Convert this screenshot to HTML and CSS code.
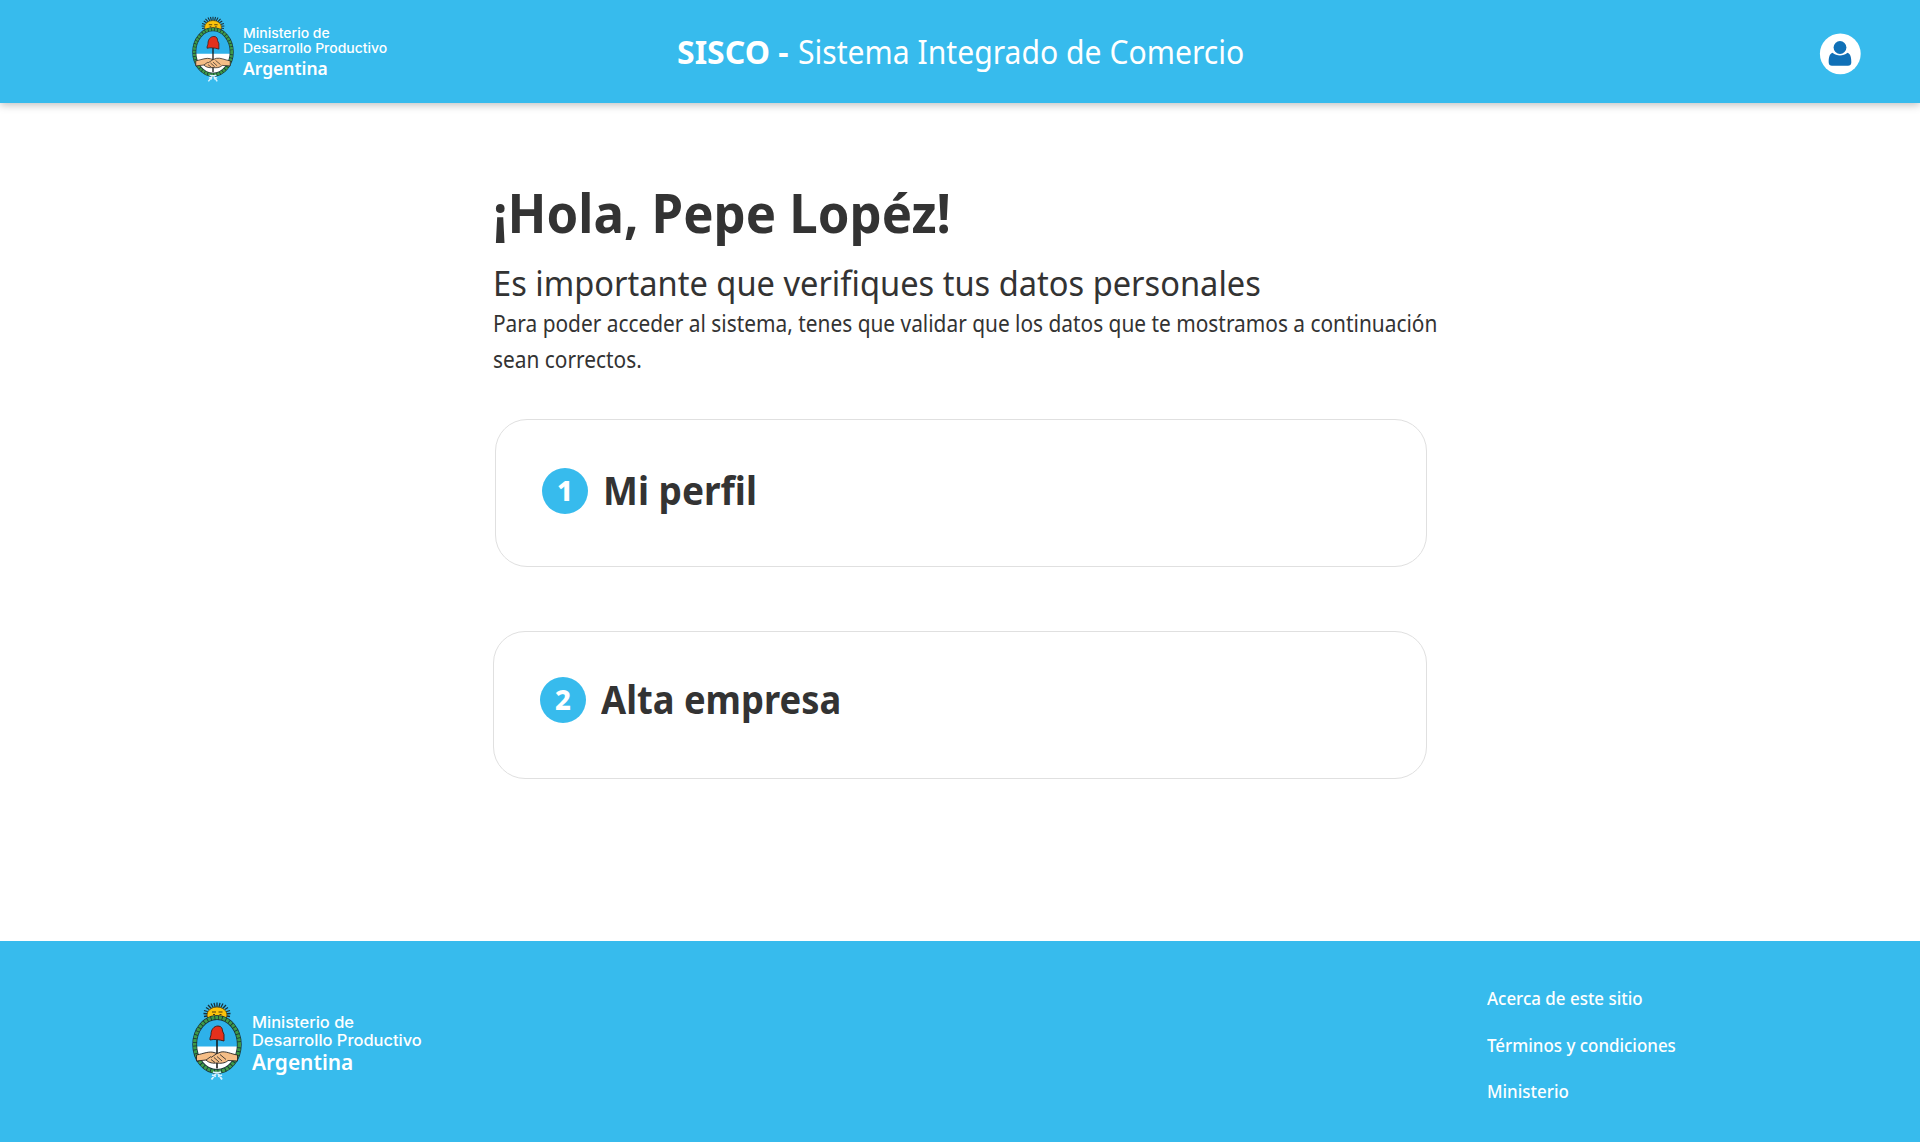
FILE: index.html
```html
<!DOCTYPE html>
<html lang="es">
<head>
<meta charset="utf-8">
<title>SISCO - Sistema Integrado de Comercio</title>
<link rel="stylesheet" href="styles.css">
</head>
<body>
<svg class="defs" aria-hidden="true">
  <symbol id="escudo" viewBox="0 0 50 78">
    <g stroke="#17303a" stroke-width="1.300">
      <path d="M25 12 12 8M25 12 14 5M25 12 16 2.500M25 12 19 1M25 12 22 .3M25 12V0M25 12 28 .3M25 12 31 1M25 12 34 2.500M25 12 36 5M25 12 38 8M25 12 11.500 11M25 12 38.500 11M25 12 12 14M25 12 38 14"/>
    </g>
    <ellipse cx="25" cy="12.500" rx="10" ry="8" fill="#fcc30b" stroke="#5b4a12" stroke-width=".8"/>
    <path d="M20 9.500h4M26.500 9.500h4M21 12h2M27.500 12h2M22.500 14.500h5" stroke="#4a3b12" stroke-width="1.100" fill="none"/>
    <ellipse cx="25" cy="42" rx="22.300" ry="27" fill="#fff"/>
    <path d="M2.700 44C2 6 48 6 47.300 44Z" fill="#2eb1ea"/>
    <ellipse cx="25" cy="42" rx="22.300" ry="27" fill="none" stroke="#17303a" stroke-width="4.800"/>
    <ellipse cx="25" cy="42" rx="22.300" ry="27" fill="none" stroke="#3d9a47" stroke-width="3.400" stroke-dasharray="3 .8"/>
    <path d="M25 37V66" stroke="#111" stroke-width="1.500"/>
    <path d="M4.500 52.500C12 51 17 48.500 22 50L25 51 29 49.500C34 48.500 39 51.500 45.500 52.500V58.500L36 58C33 61 28 61 25 60.500 21 61 17 60.500 14 57.500L4.500 58.500Z" fill="#f5bd86" stroke="#222" stroke-width=".9"/>
    <path d="M19 55 25 51M19 57 23 60M22 55 27 59.500M25 54 30 58.500M28 52 34 57M14 57.500 19 54" stroke="#222" stroke-width=".8" fill="none"/>
    <path d="M18 37.500C17.500 35 19 34 19 32 19 27 22 23.500 26 23.500 29.500 23.500 30.500 26 30.500 28.500L32 32V38.500C27 37 22 36.500 18 37.500Z" fill="#e5301c" stroke="#3b1712" stroke-width=".9"/>
    <path d="M21 69.500Q25 71 29 69.500M24 71 19.500 77M26 71 30 77M20 72.500 24 74M30 72.500 26 74" fill="none" stroke="#d9f3ff" stroke-width="1.800"/>
  </symbol>
</svg>

<header class="topbar">
  <div class="brand">
    <svg class="brand-shield"><use href="#escudo"/></svg>
    <div class="brand-text">
      <span class="ministry">Ministerio de</span>
      <span class="ministry">Desarrollo Productivo</span>
      <span class="country">Argentina</span>
    </div>
  </div>
  <div class="app-title"><strong class="app-short">SISCO -</strong><span class="app-long">Sistema Integrado de Comercio</span></div>
  <a class="user" aria-label="Usuario">
    <svg viewBox="0 0 42 42" width="42" height="42">
      <circle cx="21.300" cy="20.800" r="20.400" fill="#fff"/>
      <circle cx="21" cy="14.500" r="6.400" fill="#0f70b7"/>
      <path d="M13.500 19.800C18 23.300 24 23.300 28.500 19.800 31.300 20.600 32.500 24.500 32.300 29.500 32.200 31.800 31 32.700 29 32.700H13C11 32.700 9.800 31.800 9.700 29.500 9.500 24.500 10.700 20.600 13.500 19.800Z" fill="#0f70b7"/>
    </svg>
  </a>
</header>

<main class="content">
  <h1 class="greeting">¡Hola, Pepe Lopéz!</h1>
  <h2 class="lead">Es importante que verifiques tus datos personales</h2>
  <p class="intro">Para poder acceder al sistema, tenes que validar que los datos que te mostramos a continuación<br>sean correctos.</p>
  <section class="card card-profile">
    <span class="step">1</span>
    <h3 class="card-title profile-title">Mi perfil</h3>
  </section>
  <section class="card card-company">
    <span class="step">2</span>
    <h3 class="card-title">Alta empresa</h3>
  </section>
</main>

<footer class="footer">
  <div class="brand brand-large">
    <svg class="brand-shield"><use href="#escudo"/></svg>
    <div class="brand-text">
      <span class="ministry">Ministerio de</span>
      <span class="ministry">Desarrollo Productivo</span>
      <span class="country">Argentina</span>
    </div>
  </div>
  <nav class="links">
    <a class="link">Acerca de este sitio</a>
    <a class="link">Términos y condiciones</a>
    <a class="link">Ministerio</a>
  </nav>
</footer>
</body>
</html>
```
FILE: styles.css
```css
* { box-sizing: border-box; margin: 0; padding: 0; }

body {
  display: flex;
  flex-direction: column;
  height: 1142px;
  overflow: hidden;
  background: #fff;
  color: #333;
  font-family: "Noto Sans", sans-serif;
}

.defs { display: none; }

.topbar {
  display: grid;
  grid-template-columns: 485px 1fr 42px;
  flex: none;
  height: 103px;
  padding: 0 59px 0 192px;
  background: #37bbed;
  box-shadow: 0 2px 8px rgba(0, 0, 0, .25);
  color: #fff;
}

.brand { display: flex; gap: 9px; padding-top: 16px; }
.brand-shield { width: 42px; height: 67px; }
.brand-text { display: flex; flex-direction: column; padding-top: 9.500px; white-space: nowrap; }
.ministry {
  font: 500 13px/15.500px Inter, sans-serif;
  transform: scaleX(1.075);
  transform-origin: left;
}
.country {
  margin-top: -2px;
  font-size: 18px;
  font-weight: 600;
  line-height: 26px;
  transform: scaleX(.97);
  transform-origin: left;
}

.app-title {
  display: flex;
  padding-top: 30px;
  font-size: 33px;
  line-height: 44px;
  white-space: nowrap;
}
.app-short { width: 121px; transform: scaleX(.97); transform-origin: left; }
.app-long { transform: scaleX(.913); transform-origin: left; }
.user { padding-top: 32.500px; line-height: 0; }

.content { display: flex; flex-direction: column; flex: none; width: 960px; margin-left: 493px; }

.greeting {
  margin-top: 75px;
  font-size: 54px;
  line-height: 68px;
  white-space: nowrap;
  transform: scaleX(.942);
  transform-origin: left;
}
.lead {
  margin-top: 15px;
  font-size: 35px;
  font-weight: 400;
  line-height: 44px;
  white-space: nowrap;
  transform: scaleX(.932);
  transform-origin: left;
}
.intro {
  font-size: 23px;
  line-height: 36px;
  white-space: nowrap;
  transform: scaleX(.907);
  transform-origin: left;
}

.card {
  display: flex;
  width: 934px;
  height: 148px;
  padding-left: 46px;
  border: 1px solid #e0e0e0;
  border-radius: 32px;
}
.card-profile { width: 932px; margin: 42px 0 0 2px; padding-top: 48px; }
.card-company { margin-top: 64px; padding-top: 45px; }

.step {
  display: flex;
  justify-content: center;
  width: 46px;
  height: 46px;
  margin-right: 15px;
  border-radius: 50%;
  background: #37bbed;
  color: #fff;
  font-size: 27.500px;
  font-weight: 800;
  line-height: 45px;
}
.card-title {
  font-size: 40px;
  line-height: 44px;
  white-space: nowrap;
  transform: scaleX(.908);
  transform-origin: left;
}
.profile-title { transform: scaleX(.925); }

.footer {
  display: flex;
  justify-content: space-between;
  height: 201px;
  margin-top: auto;
  padding: 0 220px 0 192px;
  background: #37bbed;
  color: #fff;
}
.brand-large { gap: 10px; padding-top: 61px; }
.brand-large .brand-shield { width: 50px; height: 79px; }
.brand-large .brand-text { padding-top: 12px; }
.brand-large .ministry { font-size: 15.300px; line-height: 18px; }
.brand-large .country { margin-top: -3px; font-size: 21.500px; line-height: 29px; }

.links { display: flex; flex-direction: column; gap: 22.500px; width: 213px; padding-top: 45px; }
.link {
  font-size: 18.500px;
  font-weight: 500;
  line-height: 24px;
  white-space: nowrap;
  transform: scaleX(.915);
  transform-origin: left;
}
```
